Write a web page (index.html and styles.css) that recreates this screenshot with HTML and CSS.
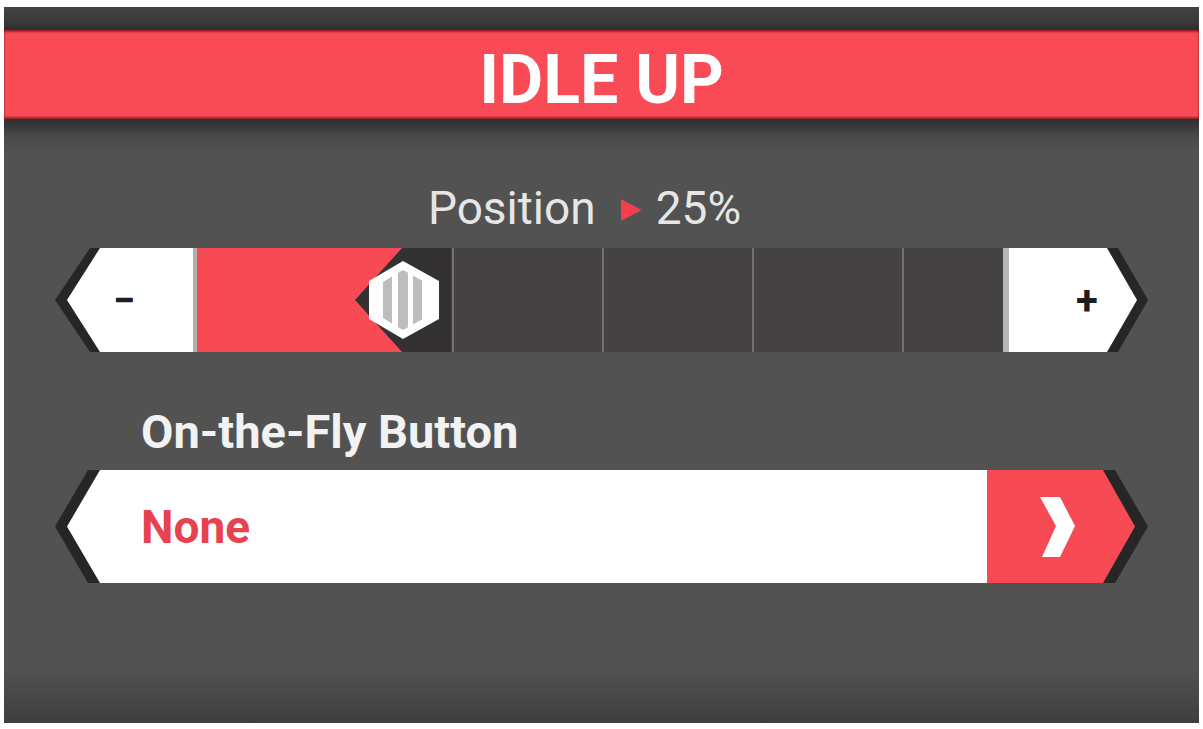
FILE: index.html
```html
<!DOCTYPE html>
<html lang="en">
<head>
    <meta charset="UTF-8">
    <title>Idle Up</title>
    <link rel="stylesheet" href="styles.css">
</head>
<body>
    <div class="panel">
        <div class="strip"></div>
        <div class="header">
            <h1 class="title">IDLE UP</h1>
        </div>
        <div class="body">
            <!-- current value -->
            <div class="readout">
                <span>Position</span>
                <span class="arrow"></span>
                <span>25%</span>
            </div>
            <!-- slider with -/+ caps -->
            <div class="slider">
                <div class="cap cap-left">
                    <div class="cap-face">&minus;</div>
                </div>
                <div class="track">
                    <div class="seg seg-first"></div>
                    <div class="seg"></div>
                    <div class="seg"></div>
                    <div class="seg"></div>
                    <div class="seg"></div>
                    <div class="seg seg-last"></div>
                    <div class="fill" style="width: 205px"></div>
                    <svg class="thumb" width="96" height="104" viewBox="0 0 96 104">
                        <defs>
                            <clipPath id="hexIn">
                                <polygon points="48,22 75,37 75,67 48,82 23,67 23,37"/>
                            </clipPath>
                        </defs>
                        <polygon points="0,52 47,0 96,0 96,104 47,104" fill="#333132"/>
                        <polygon points="48,13 84,33 84,71 48,91 14,71 14,33" fill="#ffffff"/>
                        <g clip-path="url(#hexIn)" fill="#bdbdbd">
                            <rect x="28" y="0" width="9" height="104"/>
                            <rect x="43" y="0" width="10" height="104"/>
                            <rect x="58" y="0" width="9" height="104"/>
                        </g>
                    </svg>
                </div>
                <div class="cap cap-right">
                    <div class="cap-face">+</div>
                </div>
            </div>

            <div class="label">On-the-Fly Button</div>

            <div class="select">
                <div class="select-face">
                    <div class="select-value">None</div>
                    <div class="select-arrow">
                        <svg width="40" height="64" viewBox="0 0 40 64">
                            <polygon points="2,2 22,2 37,31 22,62 4,62 18,31" fill="#ffffff"/>
                        </svg>
                    </div>
                </div>
            </div>
        </div>
    </div>
</body>
</html>
```

FILE: styles.css
```css
*{
    margin: 0;
    padding: 0;
    box-sizing: border-box;
}
body{
    background-color: #fff;
    padding: 7px 4px 0 4px;
    font-family: Roboto, "Liberation Sans", sans-serif;
}
.panel{
    width: 1195px;
    height: 716px;
    display: flex;
    flex-direction: column;
    background-color: #525252;
}
.strip{
    height: 23px;
    background: linear-gradient(#434343, #383838 70%, #2a2a2a);
}
.header{
    height: 89px;
    padding-top: 11px;
    background-color: #f84b56;
    box-shadow: inset 0 2px 2px rgba(60, 0, 0, 0.5), inset 0 -2px 2px rgba(60, 0, 0, 0.5);
    display: flex;
    align-items: center;
    justify-content: center;
}
.title{
    font-size: 68px;
    font-weight: 700;
    line-height: 67px;
    color: #fff;
}
.body{
    flex: 1;
    padding: 62px 0 0 51px;
    background: linear-gradient(to bottom, #2e2e2e 0, #4a4a4a 18px, #525252 34px, #525252 calc(100% - 55px), #3e3e3e 100%);
}

/* Position readout */
.readout{
    width: 1093px;
    padding-right: 34px;
    display: flex;
    justify-content: center;
    align-items: center;
    font-size: 46px;
    line-height: 54px;
    color: #e6e6e6;
}
.arrow{
    display: inline-block;
    width: 21px;
    height: 22px;
    margin: 4px 14px 0 25px;
    background-color: #f3404c;
    clip-path: polygon(0 0, 100% 50%, 0 100%);
}

/* slider */
.slider{
    margin-top: 13px;
    height: 104px;
    display: flex;
}
.cap{
    height: 104px;
    background-color: #262626;
}
.cap-face{
    height: 100%;
    background-color: #fff;
    display: flex;
    align-items: center;
    font-size: 40px;
    font-weight: 700;
    color: #1e1e1e;
}
.cap-left{
    width: 138px;
    clip-path: polygon(35px 0, 100% 0, 100% 100%, 35px 100%, 0 50%);
}
.cap-left .cap-face{
    padding-left: 58px;
    clip-path: polygon(45px 0, 100% 0, 100% 100%, 45px 100%, 12px 50%);
}
.cap-right{
    width: 145px;
    clip-path: polygon(0 0, 115px 0, 100% 50%, 115px 100%, 0 100%);
}
.cap-right .cap-face{
    padding-left: 67px;
    border-left: 6px solid #b8b8b8;
    clip-path: polygon(0 0, 104px 0, 134px 50%, 104px 100%, 0 100%);
}
.track{
    width: 810px;
    position: relative;
    display: flex;
    background-color: #454244;
    border-left: 4px solid #b0b0b0;
}
.seg{
    width: 150px;
    border-left: 2px solid #727072;
}
.seg-first{
    width: 105px;
    border-left: none;
}
.seg-last{
    flex: 1;
}
.fill{
    position: absolute;
    left: 0;
    top: 0;
    bottom: 0;
    background-color: #f84a55;
}
.thumb{
    position: absolute;
    left: 158px;
    top: 0;
}

/* on-the-fly selector */
.label{
    margin-top: 53px;
    padding-left: 86px;
    font-size: 47px;
    font-weight: 700;
    line-height: 54px;
    color: #f2f2f2;
}
.select{
    margin-top: 11px;
    width: 1093px;
    height: 113px;
    background-color: #262626;
    clip-path: polygon(33px 0, 1060px 0, 100% 50%, 1060px 100%, 33px 100%, 0 50%);
}
.select-face{
    height: 100%;
    display: flex;
    clip-path: polygon(45px 0, 1048px 0, 1080px 50%, 1048px 100%, 45px 100%, 12px 50%);
}
.select-value{
    flex: 1;
    background-color: #fff;
    padding-left: 86px;
    display: flex;
    align-items: center;
    font-size: 46px;
    font-weight: 700;
    color: #e8414f;
}
.select-arrow{
    width: 161px;
    padding-left: 51px;
    display: flex;
    align-items: center;
    background-color: #f84a55;
}
```
